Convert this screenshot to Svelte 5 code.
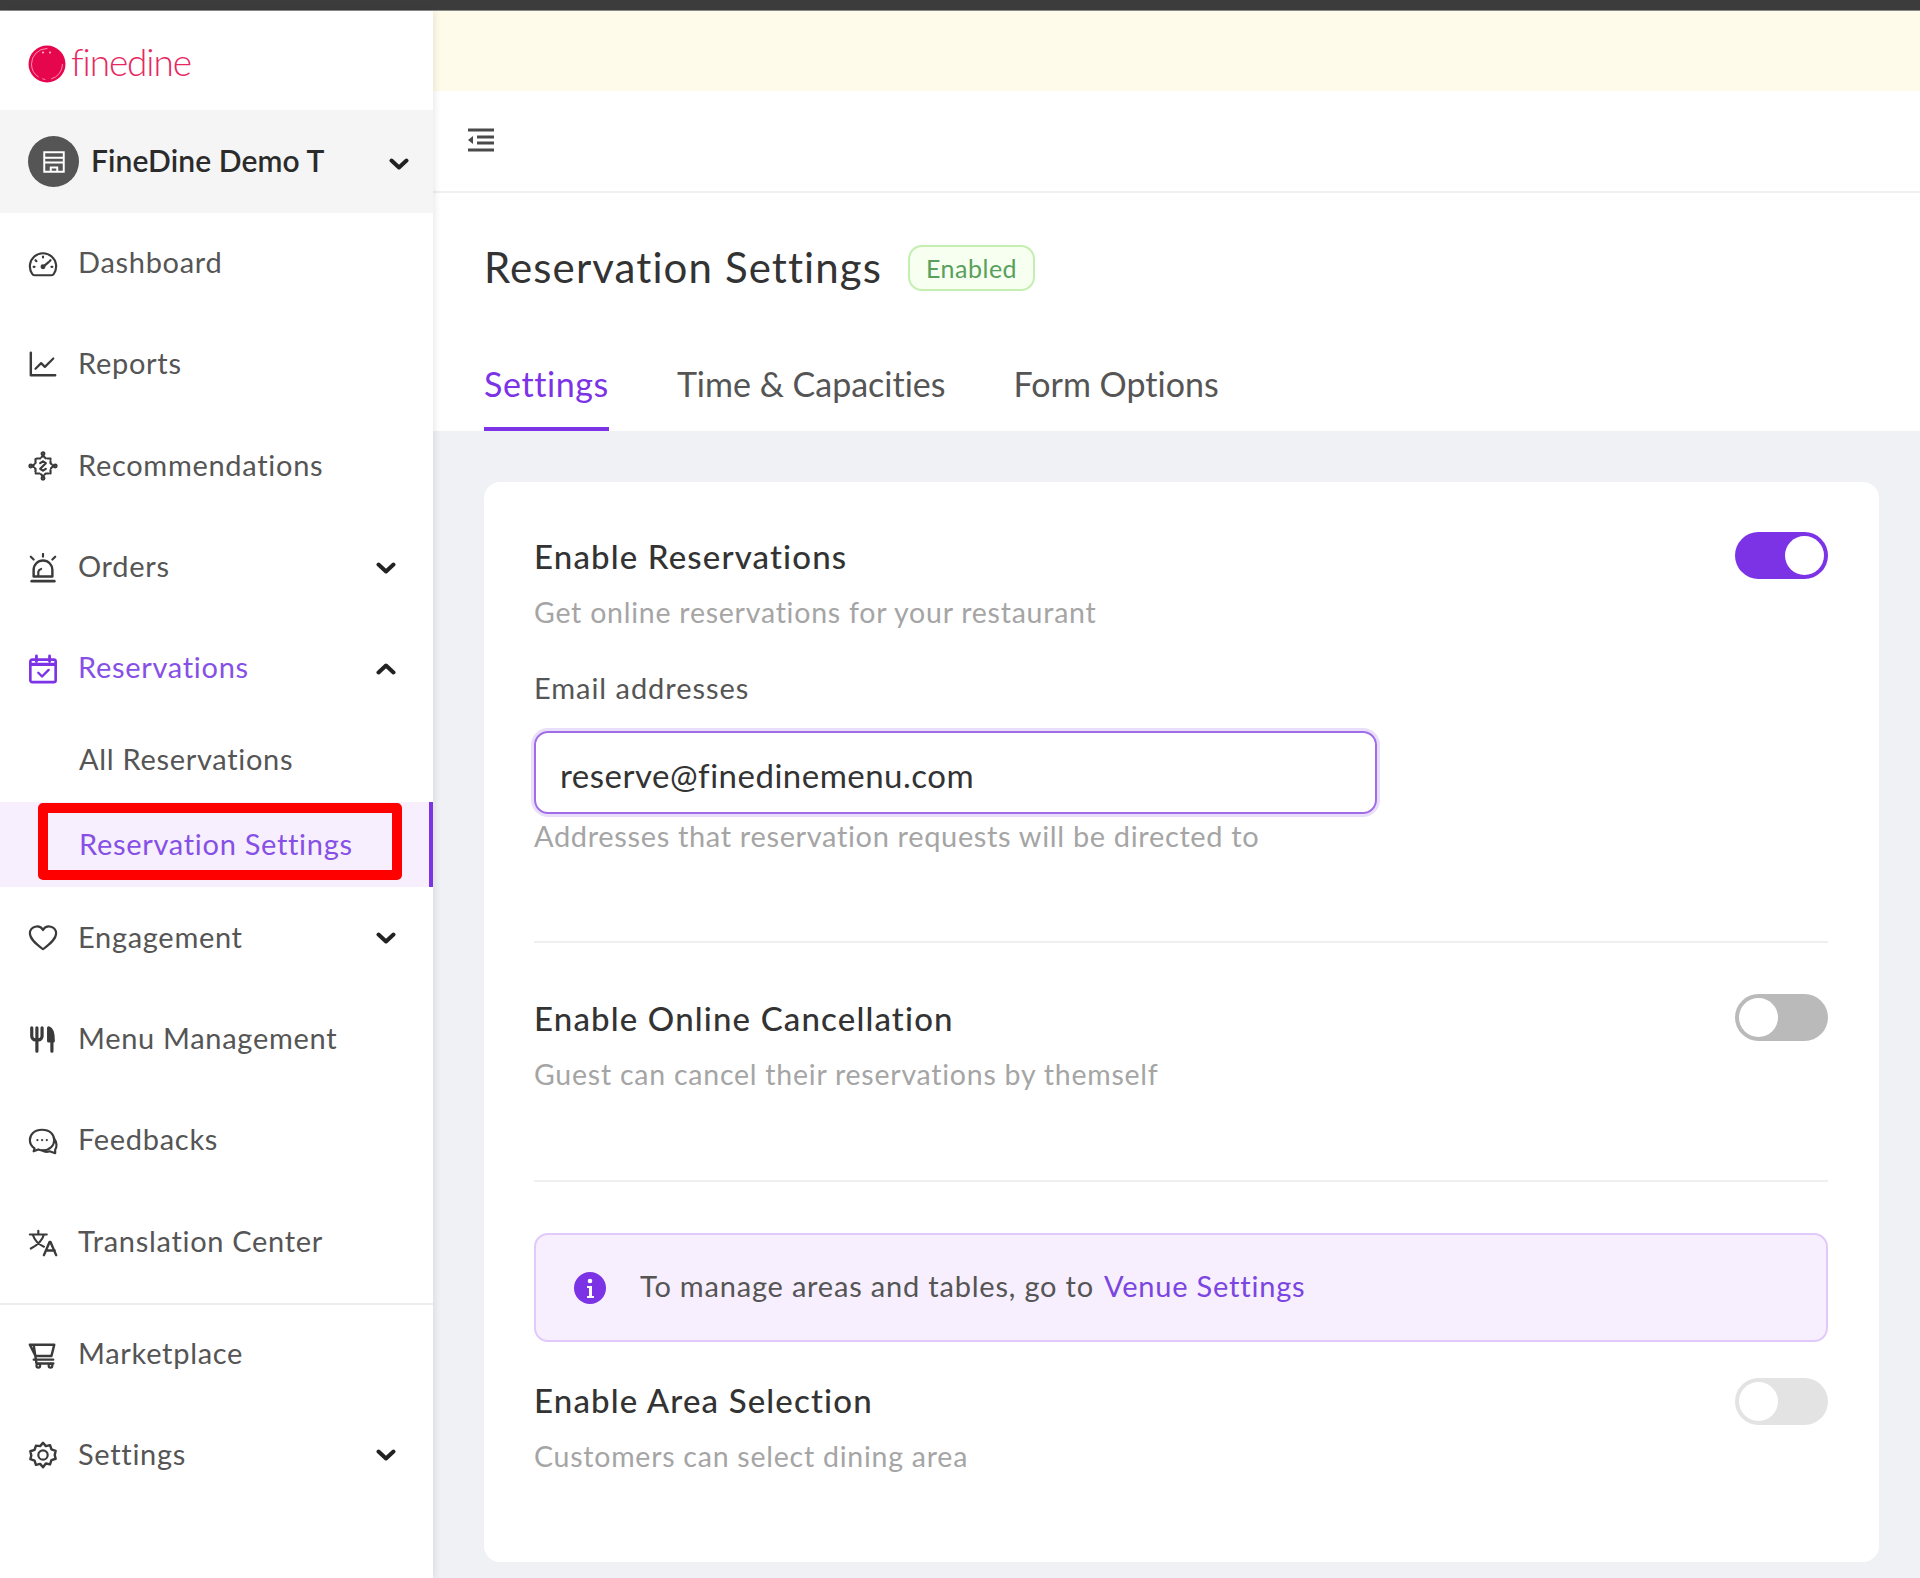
<script>
  const nav = [
    { key: 'dash', label: 'Dashboard' },
    { key: 'reports', label: 'Reports' },
    { key: 'rec', label: 'Recommendations' },
    { key: 'orders', label: 'Orders', chev: 'down' },
    { key: 'res', label: 'Reservations', chev: 'up', active: true }
  ];
  const nav2 = [
    { key: 'heart', label: 'Engagement', chev: 'down' },
    { key: 'menu', label: 'Menu Management' },
    { key: 'feed', label: 'Feedbacks' },
    { key: 'trans', label: 'Translation Center' }
  ];
  const nav3 = [
    { key: 'cart', label: 'Marketplace' },
    { key: 'gear', label: 'Settings', chev: 'down' }
  ];
</script>

{#snippet icon(k)}
  <svg class="ico" viewBox="0 0 32 32" fill="none" stroke="currentColor" stroke-width="2.300" stroke-linecap="round" stroke-linejoin="round">
    {#if k === 'dash'}
      <path d="M7 28h18a3 3 0 0 0 2.600-1.600A14 14 0 1 0 4.400 26.400A3 3 0 0 0 7 28z"/>
      <path d="M16 19l6-5M16 8v1M8 12l1 1M24 12l-1 1M6 19h1M25 19h1"/><circle cx="16" cy="19" r="1.500"/>
    {:else if k === 'reports'}
      <path d="M3 3v24h26" stroke-width="2.600"/><path d="M8 20l6-6 4 4 9-9"/>
    {:else if k === 'rec'}
      <path d="M16 5l3 3h5v5l3 3-3 3v5h-5l-3 3-3-3H8v-5l-3-3 3-3V8h5z" stroke-dasharray="4 2"/>
      <path d="M13 13l3-2 3 2-6 6 3 2 3-2"/><circle cx="16" cy="3" r="1.500"/><circle cx="16" cy="29" r="1.500"/><circle cx="3" cy="16" r="1.500"/><circle cx="29" cy="16" r="1.500"/>
    {:else if k === 'orders'}
      <path d="M6 25v-7a10 10 0 0 1 20 0v7z" stroke-width="2.600"/><path d="M4 30h24" stroke-width="3"/><path d="M16 1v3M3 4l3 3M29 4l-3 3M11 24v-4a4 4 0 0 1 3-3"/>
    {:else if k === 'res'}
      <rect x="2.500" y="6" width="27" height="24" rx="2" stroke-width="2.800"/><path d="M9 2v6M23 2v6" stroke-width="3"/><path d="M3 11h26" stroke-width="3.400"/><path d="M11 20l4 4 7-7" stroke-width="2.600"/>
    {:else if k === 'heart'}
      <path d="M16 28C8 22 2 17 2 11a7.500 7.500 0 0 1 14-3.500A7.500 7.500 0 0 1 30 11c0 6-6 11-14 17z"/>
    {:else if k === 'menu'}
      <path d="M4 4v9a4 4 0 0 0 4 4h3a4 4 0 0 0 4-4V4M9.500 4v25M22 18V4c4 1 5 6 5 14zM25.500 18v11" stroke-width="3.400"/><path d="M23 6h3v12h-3z" fill="currentColor" stroke="none"/>
    {:else if k === 'feed'}
      <path d="M7 24l-1 3 5-2c2 .7 3 1 5 1 7 0 12-5 12-11S23 4 15 4 2 9 2 15c0 4 2 7 5 9z"/><path d="M28 14c3 3 3 9 1 11v4l-6-2c-3 1-5 1-8-1"/><path d="M10 15h.1M15 15h.1M20 15h.1"/>
    {:else if k === 'trans'}
      <path d="M2 8h18M11 4v4M5 8c2 6 7 11 12 13M17 8c-2 7-8 12-14 15"/><path d="M17 30l6-14h1l6 14M19.500 25h9" stroke-width="2.600"/>
    {:else if k === 'cart'}
      <path d="M2 5h26l-3 12H8zM6 5l3 20h18" stroke-width="2.600"/><path d="M6 21h21"/><circle cx="11" cy="27.500" r="2"/><circle cx="24" cy="27.500" r="2"/>
    {:else if k === 'gear'}
      <path d="M16 3l3 3.500 4.500-1 1.500 4.500 4.500 1.500-1 4.500 1 4-4.500 1.500-1.500 4.500-4.500-1L16 29l-3-3.500-4.500 1L7 22l-4.500-1.500 1-4-1-4.500L7 10.500 8.500 6l4.500.5z" stroke-width="2.600"/><circle cx="16" cy="16" r="5"/>
    {/if}
  </svg>
{/snippet}

{#snippet chevron(dir)}
  <svg class="chev" class:up={dir === 'up'} viewBox="0 0 20 12" fill="none" stroke="#222" stroke-width="4" stroke-linecap="round" stroke-linejoin="round"><path d="M2.500 2.500L10 9.500l7.500-7"/></svg>
{/snippet}

{#snippet item(n)}
  <div class="item" class:active={n.active}>
    <span class="ic">{@render icon(n.key)}</span>
    <span class="lbl">{n.label}</span>
    {#if n.chev}{@render chevron(n.chev)}{/if}
  </div>
{/snippet}

<div class="page">
  <div class="topstrip"></div>
  <div class="shell">
    <aside class="side">
      <div class="logo">
        <svg class="mark" viewBox="0 0 38 38"><circle cx="19" cy="19" r="18.500" fill="#e6064e"/><circle cx="19" cy="19" r="15.500" fill="none" stroke="#ff8fb0" stroke-width="1" stroke-dasharray="20 6 3 4 40 30"/><circle cx="15" cy="7.500" r="1" fill="#ffc3d4"/><circle cx="22" cy="7.500" r="1" fill="#ffc3d4"/></svg>
        <span class="brand">finedine</span>
      </div>
      <div class="acct">
        <span class="avatar">
          <svg viewBox="0 0 24 24" fill="none" stroke="#fff" stroke-width="1.800"><path d="M3 3h18v18H3zM3 8h18M3 12.500h18"/><path d="M9 21v-4h6v4"/></svg>
        </span>
        <span class="aname">FineDine Demo T</span>
        {@render chevron('down')}
      </div>
      <nav class="nav">
        {#each nav as n}{@render item(n)}{/each}
        <div class="sub first">All Reservations</div>
        <div class="sub cur">
          <span>Reservation Settings</span>
          <i class="redbox"></i>
        </div>
        {#each nav2 as n}{@render item(n)}{/each}
      </nav>
      <div class="nav lower">
        {#each nav3 as n}{@render item(n)}{/each}
      </div>
    </aside>

    <main class="main">
      <div class="banner"></div>
      <div class="bar">
        <svg class="collapse" viewBox="0 0 28 26" fill="none" stroke="#4a4a4a" stroke-width="3"><path d="M1 3h26M10 10h17M10 16h17M1 23h26"/><path d="M6 9v8l-5-4z" fill="#4a4a4a" stroke="none"/></svg>
      </div>
      <header class="head">
        <div class="titlerow">
          <h1>Reservation Settings</h1>
          <span class="badge">Enabled</span>
        </div>
        <div class="tabs">
          <span class="tab on">Settings</span>
          <span class="tab">Time &amp; Capacities</span>
          <span class="tab">Form Options</span>
        </div>
      </header>
      <div class="body">
        <section class="card">
          <div class="row">
            <div class="rt">Enable Reservations</div>
            <span class="tg on"><i></i></span>
          </div>
          <p class="desc">Get online reservations for your restaurant</p>
          <div class="flabel">Email addresses</div>
          <div class="input">reserve@finedinemenu.com</div>
          <p class="help">Addresses that reservation requests will be directed to</p>
          <hr class="d1" />
          <div class="row r2">
            <div class="rt">Enable Online Cancellation</div>
            <span class="tg off"><i></i></span>
          </div>
          <p class="desc">Guest can cancel their reservations by themself</p>
          <hr class="d2" />
          <div class="alert">
            <svg class="info" viewBox="0 0 32 32"><circle cx="16" cy="16" r="16" fill="#7c33e6"/><circle cx="16" cy="9" r="2.300" fill="#fff"/><path d="M13 14h5v10h2v2h-7v-2h2v-8h-2z" fill="#fff"/></svg>
            <span class="atext">To manage areas and tables, go to</span>
            <span class="alink">Venue Settings</span>
          </div>
          <div class="row r3">
            <div class="rt">Enable Area Selection</div>
            <span class="tg dis"><i></i></span>
          </div>
          <p class="desc">Customers can select dining area</p>
        </section>
      </div>
    </main>
  </div>
</div>

<style>
  :global(body) { margin: 0; background: #f0f1f5; }
  .page { width: 1920px; height: 1578px; overflow: hidden; display: flex; flex-direction: column; font-family: "Lato", "Open Sans", sans-serif; color: #333; font-variant-ligatures: none; }
  .topstrip { height: 11px; background: #3c3c3c; border-bottom: 1px solid #8a8a8a; box-sizing: border-box; flex: none; }
  .shell { flex: 1; display: flex; min-height: 0; }
  .side { width: 433px; flex: none; background: #fff; box-shadow: 3px 0 6px rgba(0,0,0,.07); position: relative; z-index: 2; }
  .logo { height: 99px; display: flex; align-items: center; padding-left: 28px; gap: 5px; }
  .mark { width: 38px; height: 38px; margin-top: 7px; }
  .brand { font-size: 37px; font-weight: 300; color: #e6285f; line-height: 1; margin-top: 2px; letter-spacing: -1.100px; }
  .acct { height: 103px; background: #f5f5f5; display: flex; align-items: center; padding-left: 28px; }
  .avatar { width: 51px; height: 51px; border-radius: 50%; background: #555; display: flex; align-items: center; justify-content: center; flex: none; }
  .avatar svg { width: 26px; height: 26px; }
  .aname { margin-left: 12px; font-size: 30px; font-weight: 600; color: #2b2b2b; letter-spacing: .1px; flex: none; margin-top: -3px; width: 232px; white-space: nowrap; }
  .acct .chev { margin-left: 66px; margin-top: 4px; }
  .nav { display: flex; flex-direction: column; }
  .item { height: 101.300px; display: flex; align-items: center; padding-left: 28px; color: #555; font-size: 29px; letter-spacing: .7px; position: relative; box-sizing: border-box; }
  .item.active { color: #8650e6; }
  .ic { width: 30px; height: 30px; flex: none; color: #3a3a3a; display: flex; }
  .item.active .ic { color: #7c33e6; }
  .ico { width: 30px; height: 30px; }
  .lbl { margin-left: 20px; flex: 1; margin-top: -4px; }
  .chev { width: 20px; height: 12px; flex: none; }
  .chev.up { transform: scaleY(-1); }
  .item .chev { margin-right: 37px; }
  .sub { height: 85px; display: flex; align-items: center; padding-left: 79px; font-size: 29px; letter-spacing: .7px; color: #555; box-sizing: border-box; position: relative; }
  .sub.first { height: 83px; padding-bottom: 4px; }
  .sub.cur { color: #8650e6; background: #f7effd; border-right: 4px solid #7c33e6; padding-bottom: 3px; }
  .redbox { position: absolute; left: 38px; top: 1px; width: 364px; height: 77px; border: 10px solid #ff0000; border-radius: 5px; box-sizing: border-box; }
  .lower { border-top: 2px solid #eeeeee; margin-top: 10px; }
  .lower .item:first-child { height: 100px; }
  .main { flex: 1; min-width: 0; display: flex; flex-direction: column; }
  .banner { height: 80px; background: #fffbea; flex: none; }
  .bar { height: 102px; background: #fff; border-bottom: 2px solid #f0f0f0; box-sizing: border-box; display: flex; align-items: center; padding-left: 34px; flex: none; }
  .collapse { width: 28px; height: 26px; margin-bottom: 2px; }
  .head { background: #fff; height: 238px; box-sizing: border-box; padding: 50px 0 0 51px; flex: none; }
  .titlerow { display: flex; align-items: center; gap: 26px; height: 48px; }
  h1 { margin: 0; font-size: 42px; font-weight: 400; color: #333; line-height: 48px; letter-spacing: 1.100px; }
  .badge { width: 127px; height: 46px; box-sizing: border-box; border: 2px solid #c5eeb1; background: #f6fff0; border-radius: 14px; color: #58a05c; font-size: 25px; letter-spacing: .5px; display: flex; align-items: center; justify-content: center; margin-top: 1px; }
  .tabs { display: flex; gap: 68px; margin-top: 63px; }
  .tab { font-size: 34px; color: #555; height: 77px; box-sizing: border-box; line-height: 48px; padding-top: 6px; }
  .tab.on { color: #7c33e6; border-bottom: 4px solid #7c33e6; letter-spacing: .6px; }
  .body { flex: 1; padding: 51px 41px 0 51px; }
  .card { background: #fff; border-radius: 16px; height: 1080px; box-sizing: border-box; padding: 50px 51px 0 50px; }
  .row { display: flex; justify-content: space-between; align-items: flex-start; height: 46px; }
  .r2 { margin-top: 51px; }
  .r3 { margin-top: 36px; }
  .r3 .rt { margin-top: -2px; }
  .r3 + .desc { margin-top: 9px; }
  .rt { font-size: 33px; font-weight: 500; color: #333; line-height: 48px; letter-spacing: 1.150px; }
  .desc { margin: 11px 0 0; font-size: 28.500px; line-height: 46px; letter-spacing: .76px; color: #a5a5a5; }
  .flabel { margin-top: 33px; font-size: 29px; line-height: 40px; letter-spacing: .95px; color: #555; }
  .input { margin-top: 23px; height: 83px; width: 843px; box-sizing: border-box; border: 2px solid #a06ce8; border-radius: 14px; box-shadow: 0 0 0 3px #eadffb; font-size: 33px; letter-spacing: .5px; color: #333; padding: 4px 0 0 24px; display: flex; align-items: center; }
  .help { margin: 2px 0 0; font-size: 29px; line-height: 40px; letter-spacing: .65px; color: #a5a5a5; }
  hr { border: 0; height: 2px; background: #efefef; margin: 0; }
  .d1 { margin-top: 85px; }
  .d2 { margin-top: 83px; }
  .alert { margin-top: 51px; height: 109px; box-sizing: border-box; border: 2px solid #e2c9fb; background: #f7effd; border-radius: 14px; display: flex; align-items: center; padding-left: 38px; font-size: 29px; letter-spacing: .8px; color: #555; }
  .info { width: 32px; height: 32px; }
  .atext { margin-left: 34px; margin-top: -4px; }
  .alink { margin-left: 10px; color: #7a45e0; margin-top: -4px; }
  .tg { width: 93px; height: 47px; border-radius: 24px; position: relative; display: block; flex: none; }
  .tg i { position: absolute; top: 4px; width: 39px; height: 39px; border-radius: 50%; background: #fff; }
  .tg.on { background: #7c33e6; }
  .tg.on i { right: 4px; }
  .tg.off { background: #bababa; }
  .tg.off i { left: 4px; }
  .tg.dis { background: #e3e3e3; }
  .tg.dis i { left: 4px; }
</style>
